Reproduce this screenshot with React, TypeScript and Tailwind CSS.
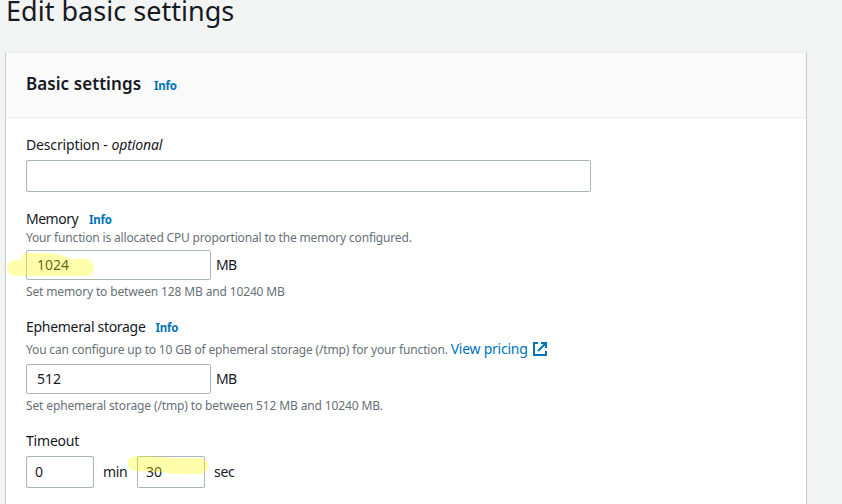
import type { ReactNode } from 'react';

function Info() {
  return <a className="pt-[2px] text-[11.5px] font-bold tracking-[-0.25px] text-[#0073bb]">Info</a>;
}

function Field({ className, children }: { className: string; children?: ReactNode }) {
  return (
    <div className={`flex shrink-0 items-center rounded-[2px] border border-[#aab7b8] bg-white pb-[2px] text-[14px] ${className}`}>
      {children}
    </div>
  );
}

function ExternalIcon() {
  return (
    <svg width="16" height="16" viewBox="0 0 16 16" fill="none" stroke="#0073bb" strokeWidth="2" className="ml-1 shrink-0">
      <path d="M6 2H2v12h12v-4M9 2h5v5M14 2 6 10" />
    </svg>
  );
}

export default function App() {
  return (
    <div className="h-[504px] w-[842px] overflow-hidden bg-[#f2f3f3] font-['Noto_Sans',sans-serif] whitespace-nowrap text-[#16191f]">
      <div className="flex h-[52px] items-start pl-[6px]">
        <h1 className="text-[27px] leading-[22px] tracking-[0.02px]">Edit basic settings</h1>
      </div>
      <section className="ml-[5px] h-[460px] w-[802px] border border-x-[#cbcfcf] border-t-[#eaeded] bg-white shadow-[0_1px_1px_rgba(0,28,36,0.1)]">
        <header className="flex h-[65px] items-center gap-[13px] border-b border-[#eaeded] bg-[#fafafa] pl-5">
          <h2 className="pb-[2px] text-[17px] leading-6 font-semibold tracking-[0.07px]">Basic settings</h2>
          <Info />
        </header>
        <div className="flex flex-col pl-5">
          <div className="mt-4 flex h-5 items-center gap-1 text-[14px] tracking-[-0.15px]">
            <span>Description -</span>
            <em>optional</em>
          </div>
          <Field className="mt-[6px] h-8 w-[565px]" />

          <div className="mt-[17px] flex h-5 items-center gap-[11px] text-[14px]">
            <span className="pb-px tracking-[-0.5px]">Memory</span>
            <Info />
          </div>
          <p className="h-[18px] text-[12px] leading-[18px] tracking-[-0.17px] text-[#687078]">Your function is allocated CPU proportional to the memory configured.</p>
          <div className="mt-[3px] flex items-center gap-[5px] text-[14px]">
            <Field className="relative h-[30px] w-[185px] pl-[10px]">
              1024
              <svg className="pointer-events-none absolute -top-px -left-[21px]" width="90" height="28" viewBox="0 0 90 28">
                <path d="M9 10H16Q15 3 22 3H41Q57 4 64 9H79C91 10 91 26 79 26H9C-1 25-1 11 9 10Z" fill="#ffff00" fillOpacity=".33" />
              </svg>
            </Field>
            <span className="pb-[2px] tracking-[-0.6px]">MB</span>
          </div>
          <p className="mt-[3px] h-[18px] text-[12px] leading-[18px] tracking-[-0.14px] text-[#687078]">Set memory to between 128 MB and 10240 MB</p>

          <div className="mt-4 flex h-5 items-center gap-[10px] text-[14px]">
            <span className="pb-[2px] tracking-[-0.3px]">Ephemeral storage</span>
            <Info />
          </div>
          <div className="mt-[2px] flex h-5 items-center text-[12px] text-[#687078]">
            <span className="pt-px tracking-[-0.16px]">You can configure up to 10 GB of ephemeral storage (/tmp) for your function.</span>
            <a className="ml-[3px] pb-[2px] text-[14px] tracking-[-0.25px] text-[#0073bb]">View pricing</a>
            <ExternalIcon />
          </div>
          <div className="mt-[5px] flex items-center gap-[5px] text-[14px]">
            <Field className="h-[30px] w-[185px] pl-[10px]">512</Field>
            <span className="pb-[2px] tracking-[-0.6px]">MB</span>
          </div>
          <p className="mt-[3px] h-[18px] text-[12px] leading-[18px] tracking-[-0.13px] text-[#687078]">Set ephemeral storage (/tmp) to between 512 MB and 10240 MB.</p>

          <div className="mt-[15px] flex h-5 items-center text-[14px] tracking-[-0.2px]">Timeout</div>
          <div className="mt-[6px] flex items-center text-[14px]">
            <Field className="h-8 w-[68px] pl-2">0</Field>
            <span className="w-[43px] pb-[2px] pl-[9px] tracking-[-0.3px]">min</span>
            <Field className="relative h-8 w-[68px] pl-2">
              30
              <svg className="pointer-events-none absolute -top-[2px] -left-[11px]" width="84" height="22" viewBox="0 0 84 22">
                <path d="M9 1H22Q49 4 72 3C84 3 84 19 72 19Q49 20 33 17L9 16C-2 15-2 2 9 1Z" fill="#ffff00" fillOpacity=".33" />
              </svg>
            </Field>
            <span className="ml-[9px] pb-[2px] tracking-[-0.3px]">sec</span>
          </div>
        </div>
      </section>
    </div>
  );
}
